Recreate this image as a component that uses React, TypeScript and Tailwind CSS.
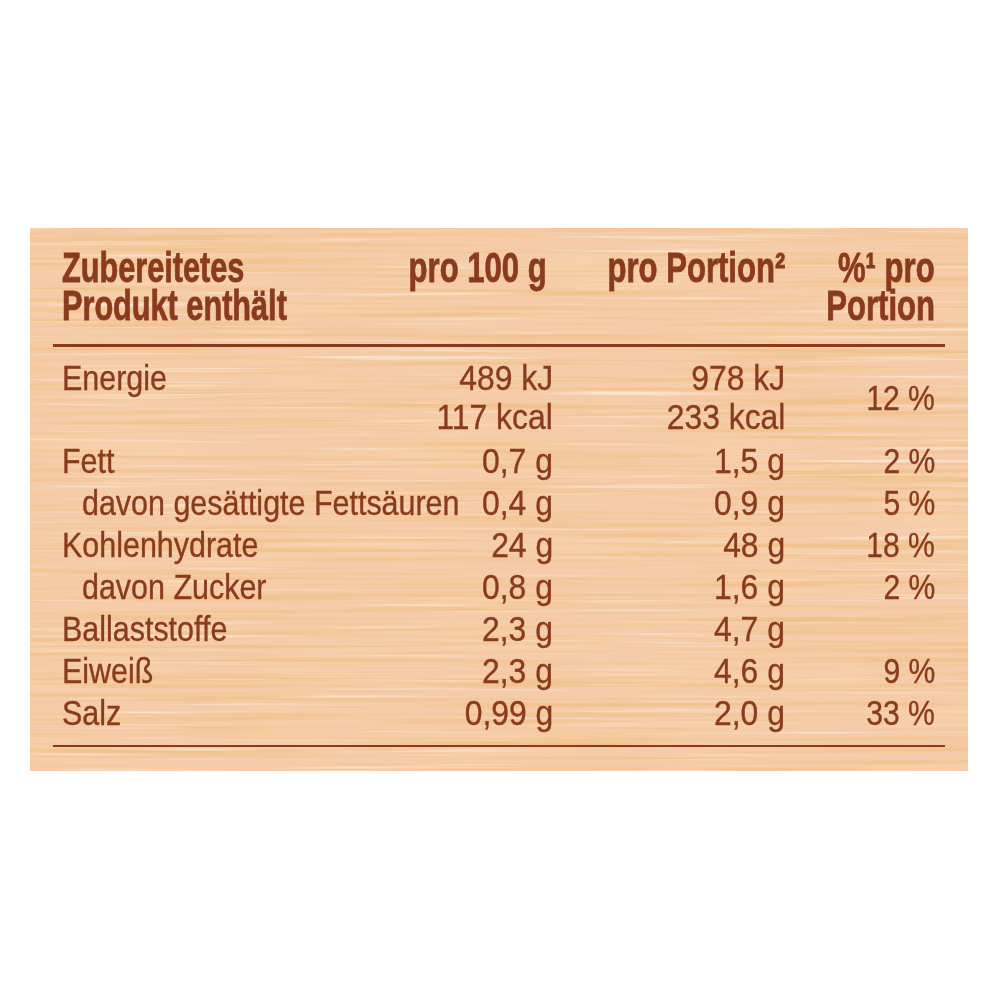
const ROWS = [
  { label: 'Fett', a: '0,7 g', b: '1,5 g', pct: '2 %' },
  { label: 'davon gesättigte Fettsäuren', sub: true, a: '0,4 g', b: '0,9 g', pct: '5 %' },
  { label: 'Kohlenhydrate', a: '24 g', b: '48 g', pct: '18 %' },
  { label: 'davon Zucker', sub: true, a: '0,8 g', b: '1,6 g', pct: '2 %' },
  { label: 'Ballaststoffe', a: '2,3 g', b: '4,7 g', pct: '' },
  { label: 'Eiweiß', a: '2,3 g', b: '4,6 g', pct: '9 %' },
  { label: 'Salz', a: '0,99 g', b: '2,0 g', pct: '33 %' },
]

// condensed look: Liberation Sans squeezed horizontally
function L({ children }: { children: React.ReactNode }) {
  return <span className="inline-block whitespace-nowrap origin-left scale-x-[0.87]">{children}</span>
}
function N({ children }: { children: React.ReactNode }) {
  return <span className="inline-block whitespace-nowrap origin-right scale-x-[0.91]">{children}</span>
}
function P({ children }: { children: React.ReactNode }) {
  return <span className="inline-block whitespace-nowrap origin-right scale-x-[0.86]">{children}</span>
}
function HL({ children }: { children: React.ReactNode }) {
  return <span className="inline-block whitespace-nowrap origin-left scale-x-[0.73]">{children}</span>
}
function HR({ children }: { children: React.ReactNode }) {
  return <span className="inline-block whitespace-nowrap origin-right scale-x-[0.74]">{children}</span>
}

function WoodGrain() {
  return (
    <svg className="absolute inset-0 h-full w-full" preserveAspectRatio="none">
      <defs>
        <filter id="grain" x="0" y="0" width="100%" height="100%">
          <feTurbulence type="fractalNoise" baseFrequency="0.003 0.2" numOctaves="3" seed="7" />
          <feColorMatrix values="0 0 0 0 0.88  0 0 0 0 0.54  0 0 0 0 0.25  3 0 0 0 -1.35" />
        </filter>
        <filter id="shine" x="0" y="0" width="100%" height="100%">
          <feTurbulence type="fractalNoise" baseFrequency="0.004 0.28" numOctaves="2" seed="21" />
          <feColorMatrix values="0 0 0 0 1  0 0 0 0 0.95  0 0 0 0 0.9  2 0 0 0 -1.2" />
        </filter>
        <filter id="patch" x="0" y="0" width="100%" height="100%">
          <feTurbulence type="fractalNoise" baseFrequency="0.006 0.03" numOctaves="2" seed="3" />
          <feColorMatrix values="0 0 0 0 0.93  0 0 0 0 0.66  0 0 0 0 0.42  1.6 0 0 0 -0.75" />
        </filter>
      </defs>
      <rect width="100%" height="100%" filter="url(#patch)" />
      <rect width="100%" height="100%" filter="url(#grain)" />
      <rect width="100%" height="100%" filter="url(#shine)" />
    </svg>
  )
}

const COLS = 'grid grid-cols-[300px_191px_232px_150px]'

export default function App() {
  return (
    <div className="min-h-[1000px] w-[1000px] bg-white pt-[228px] pl-[30px] font-['Liberation_Sans',Arial,sans-serif] text-[#8a3a1d]">
      <div className="relative w-[938px] h-[543px] overflow-hidden bg-[#f5cba9]">
        <WoodGrain />

        <div className="relative px-[23px] pt-[21px]">
          {/* header */}
          <div className={`${COLS} px-[9px] text-[42px] font-bold leading-[38px] [-webkit-text-stroke:0.8px_#8a3a1d]`}>
            <div className="flex flex-col items-start">
              <HL>Zubereitetes</HL>
              <HL>Produkt enthält</HL>
            </div>
            <div className="flex justify-end pr-[6px]">
              <HR>pro 100 g</HR>
            </div>
            <div className="flex justify-end">
              <HR>pro Portion²</HR>
            </div>
            <div className="flex flex-col items-end">
              <HR>%¹ pro</HR>
              <HR>Portion</HR>
            </div>
          </div>

          <div className="mt-[19px] h-[3px] bg-[#8a3a1d]" />

          {/* values */}
          <div className="mt-[11px] px-[9px] text-[35px] [-webkit-text-stroke:0.35px_#8a3a1d]">
            <div className={`${COLS} mb-[4px] leading-[39px]`}>
              <div className="flex flex-col items-start">
                <L>Energie</L>
              </div>
              <div className="flex flex-col items-end">
                <N>489 kJ</N>
                <N>117 kcal</N>
              </div>
              <div className="flex flex-col items-end">
                <N>978 kJ</N>
                <N>233 kcal</N>
              </div>
              <div className="flex items-center justify-end">
                <P>12 %</P>
              </div>
            </div>

            {ROWS.map(row => (
              <div key={row.label} className={`${COLS} leading-[42px]`}>
                <div className={row.sub ? 'flex pl-[20px]' : 'flex'}>
                  <L>{row.label}</L>
                </div>
                <div className="flex justify-end">
                  <N>{row.a}</N>
                </div>
                <div className="flex justify-end">
                  <N>{row.b}</N>
                </div>
                <div className="flex justify-end">
                  {row.pct && <P>{row.pct}</P>}
                </div>
              </div>
            ))}
          </div>

          <div className="mt-[11px] h-[2px] bg-[#8a3a1d]" />
        </div>
      </div>
    </div>
  )
}
